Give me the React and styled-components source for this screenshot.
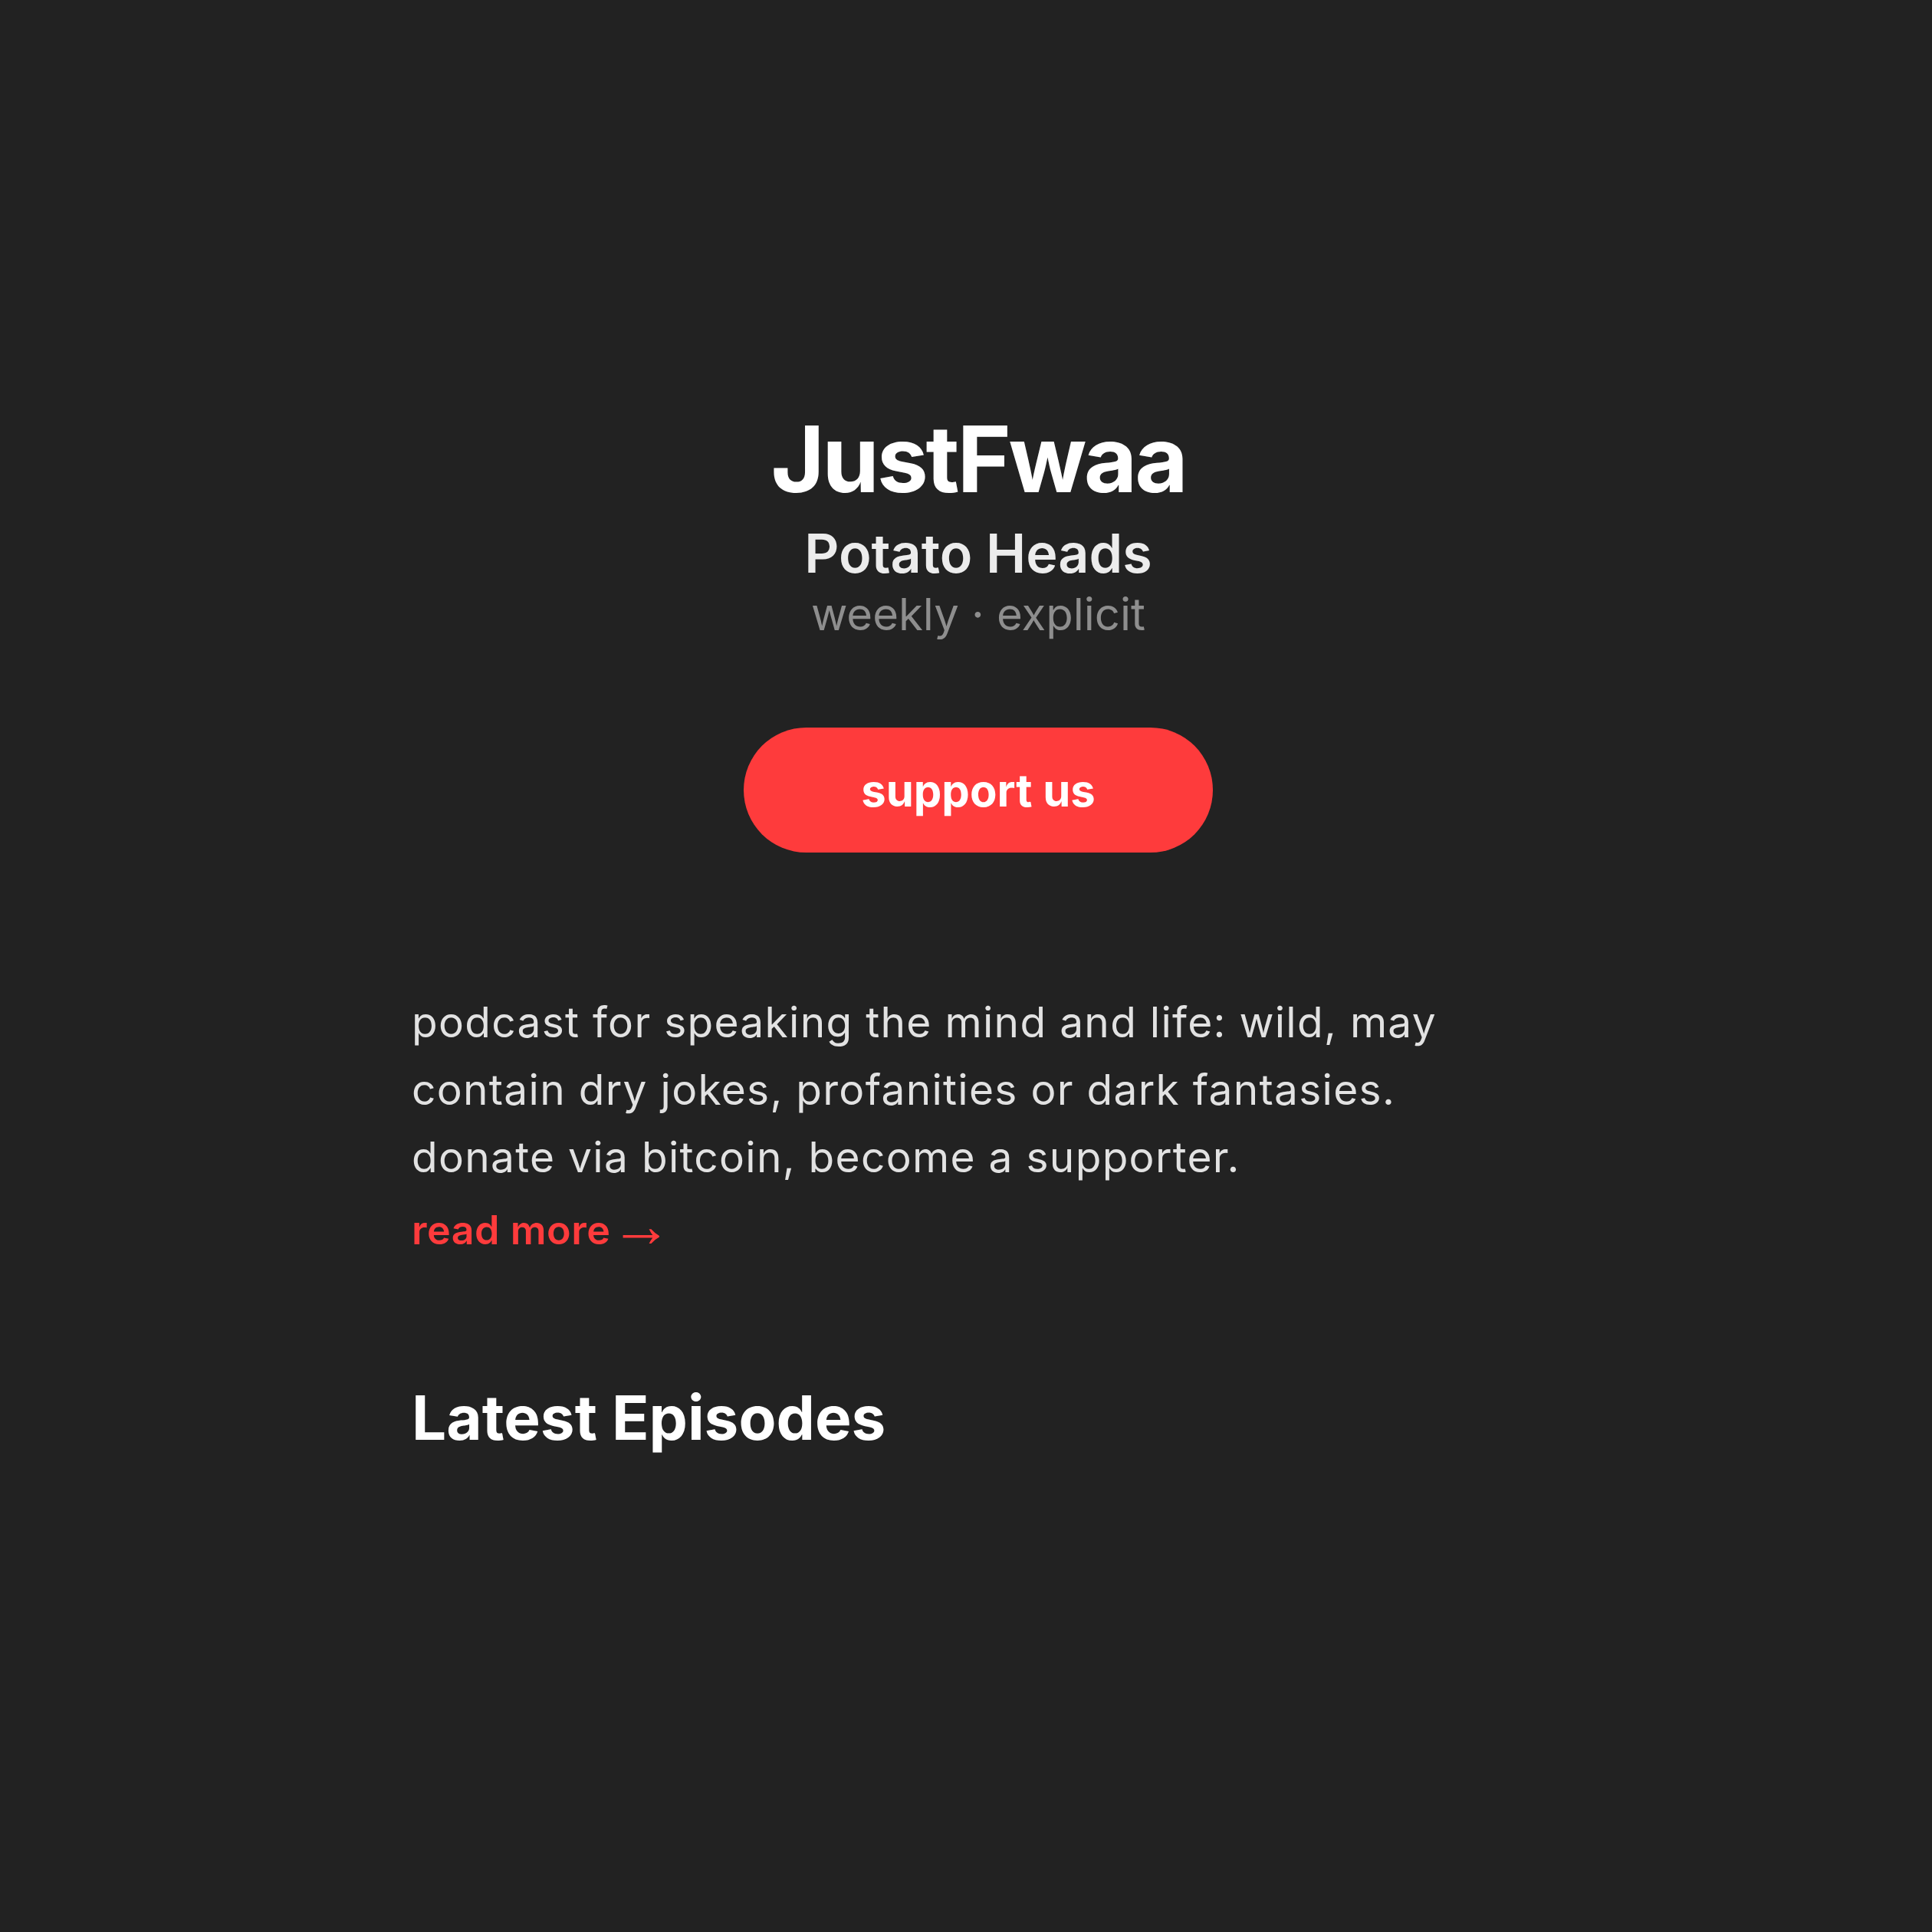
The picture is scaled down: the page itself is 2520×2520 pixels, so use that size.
import React from 'react'
import styled, { createGlobalStyle } from 'styled-components'

const GlobalStyle = createGlobalStyle`
  html, body {
    margin: 0;
    padding: 0;
    background: #222222;
  }
  body {
    font-family: 'Inter', 'Noto Sans', sans-serif;
    -webkit-font-smoothing: antialiased;
  }
`

const App = () => {
  return (
    <>
      <GlobalStyle />
      <Page>
        <Main>
          <Header>
            <Title>JustFwaa</Title>
            <Show>Potato Heads</Show>
            <Meta>weekly · explicit</Meta>
            <SupportButton>support us</SupportButton>
          </Header>

          <About>
            <Description>
              podcast for speaking the mind and life: wild, may contain dry jokes, profanities or dark fantasies.
              <br />
              donate via bitcoin, become a supporter.
            </Description>
            <ReadMore href="#about">
              read more<Arrow>→</Arrow>
            </ReadMore>
          </About>

          <SectionTitle>Latest Episodes</SectionTitle>
        </Main>
      </Page>
    </>
  )
}

export default App

const Page = styled.div`
    min-height: 100vh;
    background: #222222;
    padding: 527px 0 200px 32px;
    box-sizing: border-box;
`;

const Main = styled.main`
    max-width: 1478px;
    margin: 0 auto;
    display: flex;
    flex-direction: column;
`;

const Header = styled.header`
    display: flex;
    flex-direction: column;
    align-items: center;
    text-align: center;
`;

const Title = styled.h1`
    margin: 0;
    font-size: 120px;
    line-height: 144px;
    font-weight: 700;
    letter-spacing: -0.028em;
    color: #ffffff;
`;

const Show = styled.h2`
    margin: 9px 0 0;
    font-size: 70px;
    line-height: 84px;
    font-weight: 600;
    color: #ececec;
`;

const Meta = styled.p`
    margin: 1px 0 0;
    font-size: 58px;
    line-height: 72px;
    font-weight: 400;
    color: #8e8e8e;
`;

const SupportButton = styled.button`
    margin-top: 112px;
    height: 163px;
    padding: 0 153px;
    border: none;
    border-radius: 82px;
    background: #fe3b3c;
    color: #ffffff;
    font-family: 'Inter', sans-serif;
    font-size: 58px;
    font-weight: 700;
    cursor: pointer;
`;

const About = styled.section`
    margin-top: 177px;
    display: flex;
    flex-direction: column;
    align-items: flex-start;
`;

const Description = styled.p`
    margin: 0;
    font-size: 55px;
    line-height: 88px;
    letter-spacing: 1.3px;
    color: #e2e2e2;
`;

const ReadMore = styled.a`
    margin-top: 22px;
    font-size: 52px;
    line-height: 60px;
    font-weight: 600;
    letter-spacing: 0.5px;
    color: #fe3b3c;
    text-decoration: none;
`;

const Arrow = styled.span`
    margin-left: 0;
    font-family: 'Liberation Sans', 'DejaVu Sans', sans-serif;
    font-weight: 400;
    font-size: 80px;
    line-height: 0;
    vertical-align: -3px;
`;

const SectionTitle = styled.h2`
    margin: 166px 0 0;
    font-size: 80px;
    line-height: 96px;
    font-weight: 700;
    color: #ffffff;
`;
